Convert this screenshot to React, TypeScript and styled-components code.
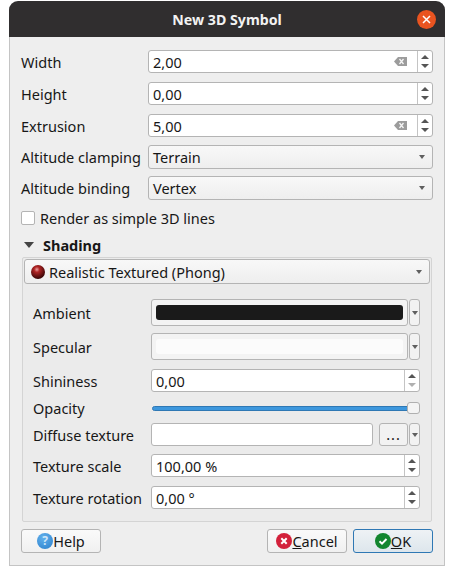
import React from "react";
import styled, { createGlobalStyle } from "styled-components";

const Global = createGlobalStyle`
  html, body { margin: 0; padding: 0; background: #fff; }
  body { font-family: "Noto Sans", "Open Sans", sans-serif; font-size: 14.5px; color: #171717; }
`;

const Dialog = styled.div`
  box-sizing: border-box;
  width: 436px;
  height: 565px;
  margin: 1px 0 0 9px;
  background: #eeeeee;
  border: 1px solid #c4c4c4;
  border-top: none;
  border-radius: 9px 9px 0 0;
  display: flex;
  flex-direction: column;
`;
const TitleBar = styled.div`
  position: relative;
  margin: 0 -1px;
  height: 36px;
  flex: none;
  background: #302e2f;
  border-radius: 9px 9px 0 0;
  color: #f2f2f2;
  font-weight: 700;
  font-size: 14.2px;
  display: flex;
  align-items: center;
  justify-content: center;
`;
const CloseButton = styled.div`
  position: absolute;
  right: 9px;
  top: 9px;
  width: 19px;
  height: 19px;
  border-radius: 50%;
  background: #e95420;
  display: flex;
  align-items: center;
  justify-content: center;
`;
const Content = styled.div`
  padding: 13px 11px 0 11px;
  display: flex;
  flex-direction: column;
`;
const Row = styled.div<{ $h: number; $mt?: number; $label?: number }>`
  display: grid;
  grid-template-columns: ${(p) => p.$label ?? 127}px 1fr;
  grid-template-rows: ${(p) => p.$h}px;
  align-items: center;
  height: ${(p) => p.$h}px;
  margin-top: ${(p) => p.$mt ?? 0}px;
`;
const Label = styled.div<{ $low?: boolean }>`
  white-space: nowrap;
  padding-top: ${(p) => (p.$low ? 1 : 0)}px;
`;
const InputBox = styled.div<{ $grow?: boolean }>`
  box-sizing: border-box;
  height: 100%;
  background: #fff;
  border: 1px solid #b4b4b4;
  border-radius: 3px;
  display: flex;
  align-items: center;
  min-width: 0;
  flex: ${(p) => (p.$grow ? 1 : "initial")};
`;
const InputText = styled.div<{ $low?: boolean }>`
  flex: 1;
  padding: ${(p) => (p.$low ? 1 : 0)}px 0 0 4px;
  white-space: nowrap;
`;
const ClearIcon = styled.svg`
  margin-right: 10px;
  flex: none;
`;
const Spin = styled.div`
  box-sizing: border-box;
  width: 15px;
  height: 100%;
  flex: none;
  border-left: 1px solid #c4c4c4;
  display: flex;
  flex-direction: column;
  align-items: center;
  justify-content: center;
  gap: 5px;
`;
const Arrow = styled.div<{ $up?: boolean; $off?: boolean }>`
  width: 0;
  height: 0;
  border-left: 4px solid transparent;
  border-right: 4px solid transparent;
  ${(p) => (p.$up ? "border-bottom" : "border-top")}: 4px solid ${(p) => (p.$off ? "#b0b0b0" : "#555555")};
`;
const ComboArrow = styled.div`
  width: 0;
  height: 0;
  flex: none;
  border-left: 3.5px solid transparent;
  border-right: 3.5px solid transparent;
  border-top: 4px solid #5f5f5f;
`;
const Combo = styled.div`
  box-sizing: border-box;
  height: 100%;
  border: 1px solid #b4b4b4;
  border-radius: 3px;
  background: linear-gradient(#f8f8f8, #eeeeee);
  display: flex;
  align-items: center;
  justify-content: space-between;
  padding: 0 7px 0 4px;
`;
const ComboLead = styled.div`
  display: flex;
  align-items: center;
  gap: 4px;
  padding-left: 2px;
`;
const CheckRow = styled.div`
  display: flex;
  align-items: center;
  gap: 5px;
  height: 18px;
  margin-top: 9px;
`;
const CheckBox = styled.div`
  box-sizing: border-box;
  width: 14px;
  height: 14px;
  background: #fff;
  border: 1px solid #b4b4b4;
  border-radius: 2px;
`;
const GroupHeader = styled.div`
  display: flex;
  align-items: center;
  gap: 9px;
  height: 18px;
  margin: 9px 0 0 3px;
  font-weight: 700;
`;
const Triangle = styled.div`
  width: 0;
  height: 0;
  border-left: 5px solid transparent;
  border-right: 5px solid transparent;
  border-top: 6px solid #444;
`;
const GroupBox = styled.div`
  box-sizing: border-box;
  height: 265px;
  margin: 3px 1px 0 1px;
  padding: 1px 1px 0;
  background: #ebebeb;
  border: 1px solid #d4d4d4;
  border-radius: 2px;
  display: flex;
  flex-direction: column;
`;
const GroupCombo = styled.div`
  height: 25px;
  flex: none;
`;
const GroupRows = styled.div`
  padding: 15px 10px 0 9px;
  display: flex;
  flex-direction: column;
`;
const ColorWrap = styled.div`
  display: flex;
  gap: 1px;
  height: 100%;
`;
const ColorButton = styled.div`
  box-sizing: border-box;
  flex: 1;
  border: 1px solid #b4b4b4;
  border-radius: 3px;
  background: #f3f3f3;
  padding: 5px 4px 5px 4px;
  display: flex;
`;
const Swatch = styled.div<{ $color: string }>`
  flex: 1;
  background: ${(p) => p.$color};
  border-radius: 3px;
`;
const MenuButton = styled.div`
  box-sizing: border-box;
  width: 11px;
  flex: none;
  border: 1px solid #b4b4b4;
  border-radius: 3px;
  background: #f2f2f2;
  display: flex;
  align-items: center;
  justify-content: center;
`;
const SliderWrap = styled.div`
  position: relative;
  height: 100%;
  padding-left: 1px;
  display: flex;
  align-items: center;
`;
const SliderTrack = styled.div`
  box-sizing: border-box;
  width: 100%;
  height: 5px;
  background: #3d97dd;
  border: 1px solid #2f78b4;
  border-radius: 3px;
`;
const SliderHandle = styled.div`
  position: absolute;
  right: 0;
  top: 0;
  box-sizing: border-box;
  width: 13px;
  height: 12px;
  background: #f4f4f4;
  border: 1px solid #b0b0b0;
  border-radius: 3px;
`;
const TextureWrap = styled.div`
  display: flex;
  height: 100%;
`;
const Dots = styled.div`
  box-sizing: border-box;
  width: 29px;
  margin-left: 6px;
  margin-right: 1px;
  flex: none;
  border: 1px solid #b4b4b4;
  border-radius: 3px;
  background: #f2f2f2;
  text-align: center;
  letter-spacing: 1px;
  line-height: 20px;
`;
const Footer = styled.div`
  display: flex;
  justify-content: space-between;
  height: 24px;
  margin-top: 7px;
`;
const FooterRight = styled.div`
  display: flex;
  gap: 6px;
`;
const Button = styled.div<{ $primary?: boolean }>`
  box-sizing: border-box;
  width: 80px;
  height: 24px;
  border: 1px solid ${(p) => (p.$primary ? "#2f78b4" : "#b4b4b4")};
  border-radius: 3px;
  background: ${(p) => (p.$primary ? "linear-gradient(#eef2f5, #dde6ec)" : "linear-gradient(#fafafa, #f0f0f0)")};
  display: flex;
  align-items: center;
  justify-content: center;
`;
const HelpIcon = styled.span`
  width: 16px;
  height: 16px;
  border-radius: 50%;
  background: radial-gradient(circle at 40% 30%, #62b0ec, #2a7fcb);
  color: #cfe6f8;
  font-size: 12px;
  font-weight: 700;
  line-height: 16px;
  text-align: center;
`;

const Clear = () => (
  <ClearIcon width="13" height="9" viewBox="0 0 13 9">
    <path d="M0 4.5 4 0h9v9H4z" fill="#9c9c9c" />
    <path d="M5.5 2 9.5 7M9.5 2l-4 5" stroke="#f4f4f4" strokeWidth="1.3" fill="none" />
  </ClearIcon>
);
const Spinner = ({ off }: { off?: boolean }) => (
  <Spin>
    <Arrow $up />
    <Arrow $off={off} />
  </Spin>
);
const SpinBox = ({ value, clear, off, low }: { value: string; clear?: boolean; off?: boolean; low?: boolean }) => (
  <InputBox>
    <InputText $low={low}>{value}</InputText>
    {clear && <Clear />}
    <Spinner off={off} />
  </InputBox>
);
const Sphere = () => (
  <svg width="14" height="14" viewBox="0 0 14 14">
    <defs>
      <radialGradient id="ball" cx="0.42" cy="0.32" r="0.65">
        <stop offset="0" stopColor="#e8a0a0" />
        <stop offset="0.3" stopColor="#b02424" />
        <stop offset="1" stopColor="#3c0606" />
      </radialGradient>
    </defs>
    <circle cx="7" cy="7" r="7" fill="url(#ball)" />
  </svg>
);
const ColorRow = ({ color }: { color: string }) => (
  <ColorWrap>
    <ColorButton>
      <Swatch $color={color} />
    </ColorButton>
    <MenuButton>
      <ComboArrow />
    </MenuButton>
  </ColorWrap>
);

export default function App() {
  return (
    <>
      <Global />
      <Dialog>
        <TitleBar>
          New 3D Symbol
          <CloseButton>
            <svg width="9" height="9" viewBox="0 0 9 9">
              <path d="M1 1l7 7M8 1 1 8" stroke="#fff" strokeWidth="1.5" />
            </svg>
          </CloseButton>
        </TitleBar>
        <Content>
          <Row $h={23}><Label $low>Width</Label><SpinBox value="2,00" clear low /></Row>
          <Row $h={23} $mt={9}><Label $low>Height</Label><SpinBox value="0,00" low /></Row>
          <Row $h={23} $mt={9}><Label $low>Extrusion</Label><SpinBox value="5,00" clear low /></Row>
          <Row $h={24} $mt={8}>
            <Label>Altitude clamping</Label>
            <Combo>Terrain<ComboArrow /></Combo>
          </Row>
          <Row $h={24} $mt={7}>
            <Label>Altitude binding</Label>
            <Combo>Vertex<ComboArrow /></Combo>
          </Row>
          <CheckRow><CheckBox />Render as simple 3D lines</CheckRow>
          <GroupHeader><Triangle />Shading</GroupHeader>
          <GroupBox>
            <GroupCombo>
              <Combo>
                <ComboLead><Sphere />Realistic Textured (Phong)</ComboLead>
                <ComboArrow />
              </Combo>
            </GroupCombo>
            <GroupRows>
              <Row $h={27} $label={118}><Label>Ambient</Label><ColorRow color="#1a1a1a" /></Row>
              <Row $h={27} $mt={7} $label={118}><Label>Specular</Label><ColorRow color="#fbfbfb" /></Row>
              <Row $h={23} $mt={9} $label={118}><Label>Shininess</Label><SpinBox value="0,00" off /></Row>
              <Row $h={12} $mt={10} $label={118}>
                <Label>Opacity</Label>
                <SliderWrap><SliderTrack /><SliderHandle /></SliderWrap>
              </Row>
              <Row $h={23} $mt={9} $label={118}>
                <Label>Diffuse texture</Label>
                <TextureWrap>
                  <InputBox $grow />
                  <Dots>...</Dots>
                  <MenuButton><ComboArrow /></MenuButton>
                </TextureWrap>
              </Row>
              <Row $h={23} $mt={8} $label={118}><Label>Texture scale</Label><SpinBox value="100,00 %" /></Row>
              <Row $h={23} $mt={9} $label={118}><Label>Texture rotation</Label><SpinBox value="0,00 °" /></Row>
            </GroupRows>
          </GroupBox>
          <Footer>
            <Button><HelpIcon>?</HelpIcon>Help</Button>
            <FooterRight>
              <Button>
                <svg width="16" height="16" viewBox="0 0 16 16">
                  <circle cx="8" cy="8" r="8" fill="#d3213b" />
                  <path d="M5.3 5.3l5.4 5.4M10.7 5.3l-5.4 5.4" stroke="#fff" strokeWidth="2" />
                </svg>
                <span><u>C</u>ancel</span>
              </Button>
              <Button $primary>
                <svg width="16" height="16" viewBox="0 0 16 16">
                  <circle cx="8" cy="8" r="8" fill="#12862f" />
                  <path d="M4.5 8.2l2.5 2.4 4.5-4.6" stroke="#fff" strokeWidth="2" fill="none" />
                </svg>
                <span><u>O</u>K</span>
              </Button>
            </FooterRight>
          </Footer>
        </Content>
      </Dialog>
    </>
  );
}
